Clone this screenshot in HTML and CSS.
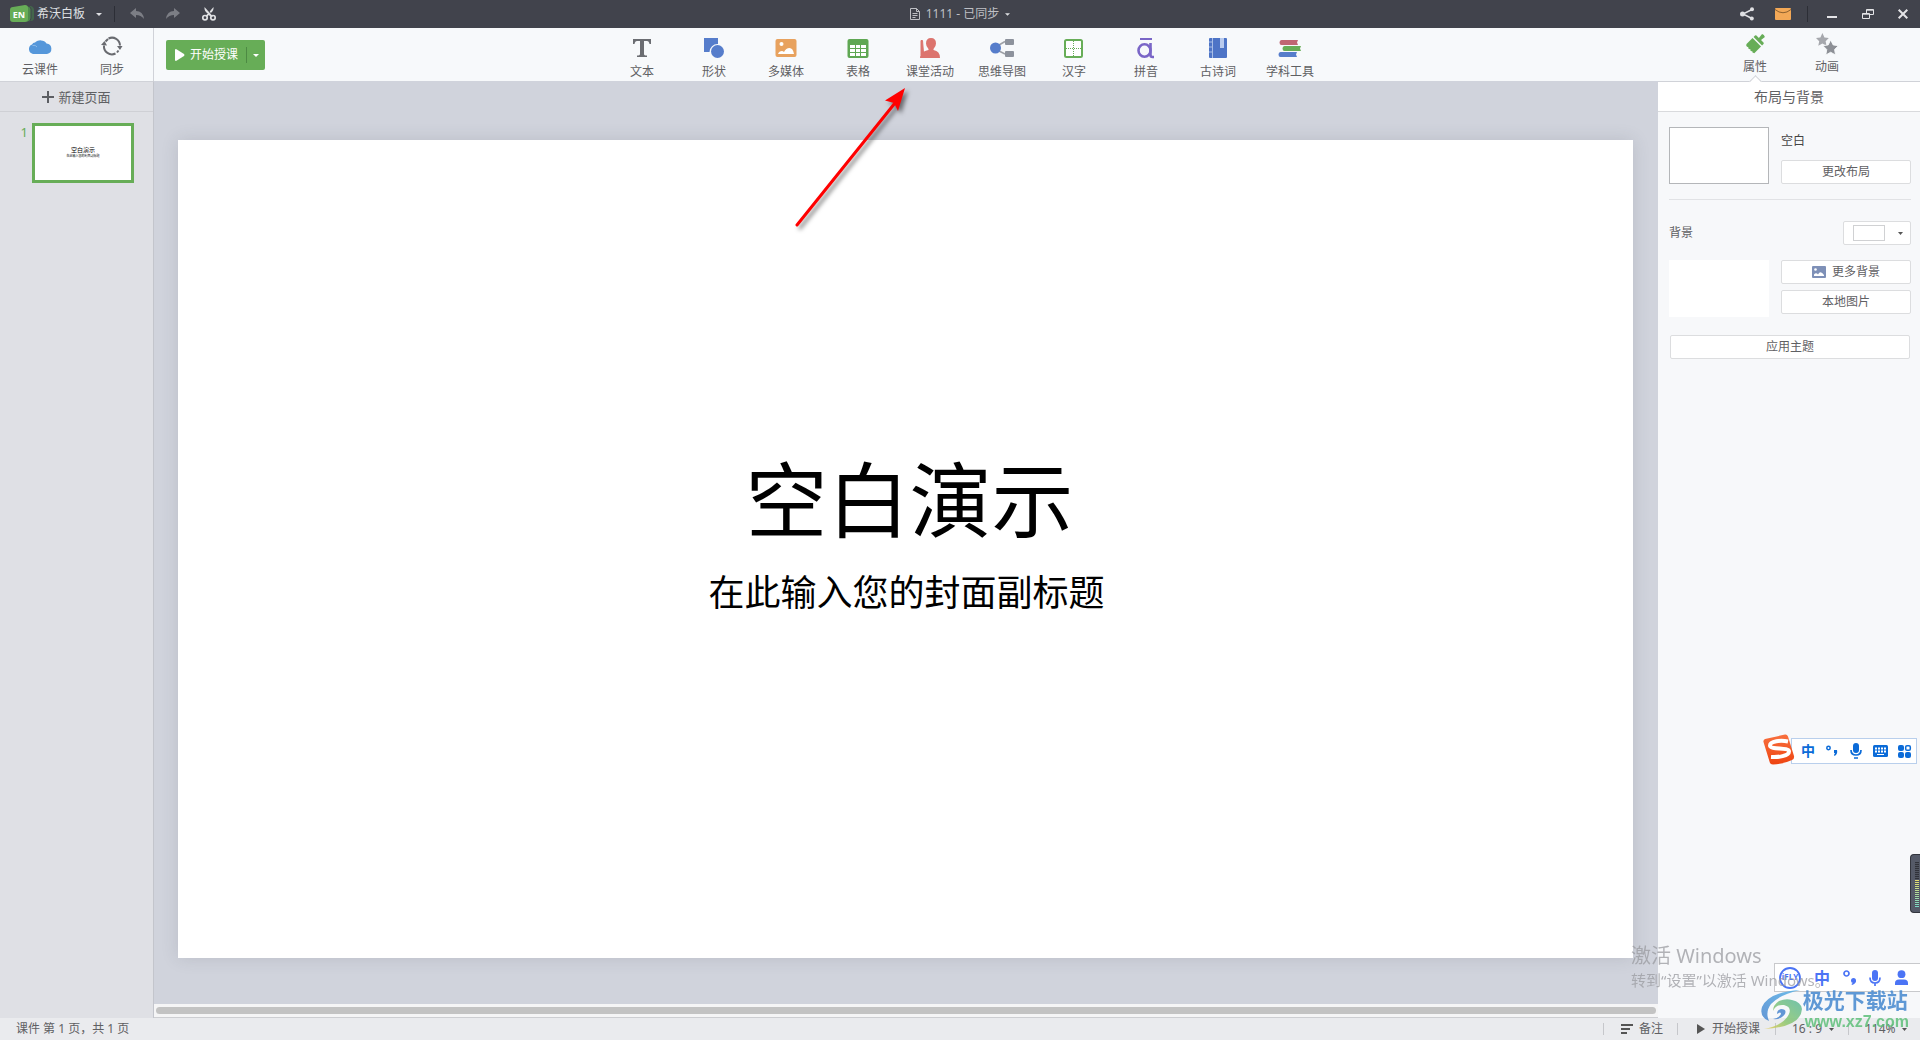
FILE: index.html
```html
<!DOCTYPE html>
<html lang="zh-CN">
<head>
<meta charset="utf-8">
<meta name="viewport" content="width=device-width, initial-scale=1">
<title>希沃白板</title>
<link rel="stylesheet" href="styles.css">
</head>
<body>
<header class="titlebar">
  <div class="titlebar-left">
    <svg class="logo" width="25" height="18" viewBox="0 0 25 18" aria-hidden="true">
      <path d="M18 1h3q3 1 3 4v8q0 3-3 3h-3z" fill="#43664b"/>
      <path d="M16 1h2q3 1 3 3v9q0 3-3 4h-2z" fill="#4e8a4d" stroke="#41434c" stroke-width="1"/>
      <path d="M3 2 15 0q3 0 3 3v11q0 3-3 3H3q-3 0-3-3V5q0-3 3-3z" fill="#67ad57"/>
      <text x="9" y="13" text-anchor="middle" class="logo-text">EN</text>
    </svg>
    <button class="app-menu" type="button">希沃白板<svg class="caret" width="6" height="3" viewBox="0 0 6 3"><path d="M0 0h6L3 3z"/></svg></button>
    <span class="bar-sep"></span>
    <button class="tool-btn dim" type="button" aria-label="撤销"><svg width="14" height="12" viewBox="0 0 14 12"><path d="M6 0v3q7 0 8 8-3-4-8-4v3L0 5z"/></svg></button>
    <button class="tool-btn dim" type="button" aria-label="重做"><svg width="14" height="12" viewBox="0 0 14 12"><path d="M8 0v3Q1 3 0 11q3-4 8-4v3l6-5z"/></svg></button>
    <button class="tool-btn" type="button" aria-label="剪切"><svg width="14" height="14" viewBox="0 0 14 14"><g fill="none" stroke="#dfe0e3" stroke-width="1.700"><circle cx="3" cy="10.700" r="2.200"/><circle cx="11" cy="10.700" r="2.200"/></g><path d="M2.500 0 11 9.500 9 10 6.800 8 5 10 3.400 9 5.800 6.500Q2 4 2.500 0zM11.500 0 7.700 4.600 8.800 5.900Q12 3.500 11.500 0z" fill="#dfe0e3"/></svg></button>
  </div>
  <button class="doc-title" type="button">
    <svg width="10" height="12" viewBox="0 0 10 12" fill="none" stroke="#bfc0c5"><path d="M.5.500h6l3 3v8h-9zM6.500.500v3h3M2.500 5.500h5M2.500 7.500h5M2.500 9.500h3"/></svg>
    <span>1111 - 已同步</span>
    <svg class="caret" width="5" height="3" viewBox="0 0 6 3"><path d="M0 0h6L3 3z"/></svg>
  </button>
  <div class="titlebar-right">
    <button class="tool-btn" type="button" aria-label="分享"><svg width="14" height="14" viewBox="0 0 14 14"><path d="M12 2.500 3 7l9 4.500" fill="none" stroke="#dfe0e3" stroke-width="1.500"/><g fill="#dfe0e3"><circle cx="2.500" cy="7" r="2.500"/><circle cx="12" cy="2.300" r="2"/><circle cx="11.800" cy="11.500" r="2"/></g></svg></button>
    <button class="tool-btn" type="button" aria-label="消息"><svg width="16" height="12" viewBox="0 0 16 12"><rect width="16" height="12" rx="1" fill="#f3a856"/><path d="M0 1.500Q8 8 16 1.500" fill="none" stroke="#8d612f"/></svg></button>
    <span class="bar-sep"></span>
    <button class="tool-btn" type="button" aria-label="最小化"><svg width="10" height="12" viewBox="0 0 10 12"><path d="M0 8h10v2H0z" fill="#e4e4e7"/></svg></button>
    <button class="tool-btn" type="button" aria-label="还原"><svg width="12" height="10" viewBox="0 0 12 10" fill="none" stroke="#e4e4e7"><path d="M.5 4.500h7v5h-7zM.5 5.200h7M4.500 4V.500h7v5H8M4.500 1.200h7"/></svg></button>
    <button class="tool-btn close" type="button" aria-label="关闭"><svg width="10" height="10" viewBox="0 0 10 10"><path d="M.7.700l8.600 8.600M9.300.700.700 9.300" stroke="#e4e4e7" stroke-width="2"/></svg></button>
  </div>
</header>

<nav class="toolbar">
  <div class="tools-left">
    <button class="tool" type="button"><svg width="24" height="20" viewBox="0 0 24 20"><path d="M5 18a5 5 0 0 1-1-9.500 4 4 0 0 1 3-2A7 6 0 0 1 18.500 7.500 5.300 5.300 0 0 1 19 18z" fill="#5597da"/><path d="M4.500 9.500Q7.500 8.500 9 11" fill="none" stroke="#8dbbe9"/></svg>云课件</button>
    <button class="tool" type="button"><svg width="24" height="20" viewBox="0 0 24 20"><path d="M8.500 2.500A8 8 0 0 1 20 9.500M15.500 17.500A8 8 0 0 1 4 9.500M5.500 5.500 8 3M18.500 14.500 17 16.500" fill="none" stroke="#696b70" stroke-width="2"/><path d="M1 9 4.500 5 7 9.500zM17 10h5.500L20 14z" fill="#696b70"/></svg>同步</button>
  </div>
  <div class="start">
    <button class="start-main" type="button"><svg width="10" height="12" viewBox="0 0 10 12"><path d="M0 1q0-1 1-1l8 5q1 1 0 2l-8 5q-1 0-1-1z" fill="#fff"/></svg>开始授课</button>
    <button class="start-more" type="button" aria-label="更多授课方式"><svg width="6" height="3" viewBox="0 0 6 3"><path d="M0 0h6L3 3z" fill="#fff"/></svg></button>
  </div>
  <div class="tools-main">
    <button class="tool" type="button"><svg width="24" height="20" viewBox="0 0 24 20"><path d="M3 1h18v5h-1.500Q19 3 17 3h-3v13q0 1.500 3 1.500V19H7v-1.500q3 0 3-1.500V3H7Q5 3 4.500 6H3z" fill="#6b6d72"/></svg>文本</button>
    <button class="tool" type="button"><svg width="24" height="20" viewBox="0 0 24 20"><path d="M2 0h14v6a8 8 0 0 0-8.500 8H2z" fill="#567dcb"/><circle cx="15.500" cy="13.500" r="6.500" fill="#567dcb"/></svg>形状</button>
    <button class="tool" type="button"><svg width="24" height="20" viewBox="0 0 24 20"><rect x="1.500" y="1" width="21" height="18" rx="2" fill="#e8a25e"/><circle cx="7.500" cy="6" r="2" fill="#fff"/><path d="M4 16q1-3 4-3 1 0 2 1 2-4 5.500-4Q19 10 20 16z" fill="#fff"/></svg>多媒体</button>
    <button class="tool" type="button"><svg width="24" height="20" viewBox="0 0 24 20"><rect x="1.500" y="1" width="21" height="19" rx="2" fill="#5fa753"/><path d="M4 7h5v3H4zM10 7h4v3h-4zM15 7h5v3h-5zM4 11h5v3H4zM10 11h4v3h-4zM15 11h5v3h-5zM4 15h5v3H4zM10 15h4v3h-4zM15 15h5v3h-5z" fill="#fff"/></svg>表格</button>
    <button class="tool" type="button"><svg width="24" height="20" viewBox="0 0 24 20"><path d="M3 2.500h1.500L5.500 15 3 17z" fill="#dc746e" stroke="#dc746e"/><path d="M13 0q5 0 5 5.500 0 3-2.500 5.500v1q6.500 1 6.500 8H2q0-4 4-6.500 3-1.500 4.500-1.500v-1Q8 8.500 8 5.500 8 0 13 0z" fill="#dc746e"/></svg>课堂活动</button>
    <button class="tool" type="button"><svg width="24" height="20" viewBox="0 0 24 20"><path d="M9 7 15 3.500M9 13l6 3" stroke="#9da0a6" stroke-width="1.500"/><circle cx="5.500" cy="10" r="5.500" fill="#567dcb"/><rect x="15" y="1" width="9" height="6" rx="1" fill="#8d929c"/><rect x="15" y="13" width="9" height="6" rx="1" fill="#8d929c"/></svg>思维导图</button>
    <button class="tool" type="button"><svg width="24" height="20" viewBox="0 0 24 20"><rect x="3" y="2" width="17" height="17" rx="1.500" fill="#fff" stroke="#67ad57" stroke-width="2"/><path d="M11.500 3v15M4 10.500h15" stroke="#67ad57" stroke-dasharray="1 1"/></svg>汉字</button>
    <button class="tool" type="button"><svg width="24" height="20" viewBox="0 0 24 20"><g fill="none" stroke="#7a66c7"><path d="M6 1h12" stroke-width="2"/><ellipse cx="10.500" cy="12.500" rx="6" ry="6.300" stroke-width="2.600"/><path d="M16.500 5v12q0 2 2 2H20" stroke-width="2.600"/></g></svg>拼音</button>
    <button class="tool" type="button"><svg width="24" height="20" viewBox="0 0 24 20"><rect x="3" width="18" height="20" rx="1" fill="#4d74c6"/><path d="M3 4h3M3 9h3M3 14h3M6.500 0v20" stroke="#a9bee6"/><path d="M14 0h4v10h-4z" fill="#b9cbee"/></svg>古诗词</button>
    <button class="tool" type="button"><svg width="24" height="20" viewBox="0 0 24 20"><path d="M3.500 2H20l-1 2.500 1 2.500H3.500q-2 0-2-2.500t2-2.500z" fill="#c06673"/><path d="M6.500 8H23l-1 2.500 1 2.500H6.500q-2 0-2-2.500t2-2.500z" fill="#67ad57"/><path d="M2.500 14H19l-1 2.500 1 2.500H2.500q-2 0-2-2.500t2-2.500z" fill="#567dcb"/></svg>学科工具</button>
  </div>
  <div class="tools-right">
    <button class="tool active" type="button"><svg width="24" height="20" viewBox="0 0 24 20"><g transform="rotate(45 12 10)" fill="#67ad57"><path d="M10-2q2-1 4 0l-.5 5H17q1 0 1 1v2H6V4q0-1 1-1h3.500zM6 7.500h12V17q-2 1.500-3 0-1 2-2.500 0-1.500 2-3 0Q7 18.500 6 16z"/></g></svg>属性</button>
    <button class="tool" type="button"><svg width="24" height="24" viewBox="0 0 24 24"><path d="M7 0l2.200 4.800 4.800.7-3.500 3.500 1 5L7 11.500 2.500 14l1-5L0 5.500l4.800-.7z" fill="#a6a8ad"/><path d="M16 7.500l2.700 5.500 5.800.800-4.200 4.200 1 6L16 21l-5.300 3 1-6-4.200-4.200 5.800-.800z" fill="#8d9096" stroke="#f7f9fb"/></svg>动画</button>
  </div>
</nav>

<div class="workspace">
  <aside class="pages">
    <button class="new-page" type="button"><svg width="12" height="12" viewBox="0 0 12 12"><path d="M6 0v12M0 6h12" stroke="#5c5e63" stroke-width="2"/></svg>新建页面</button>
    <ol class="page-list">
      <li class="page-item"><span class="page-no">1</span>
        <a class="thumb" href="#slide"><span class="thumb-title">空白演示</span><span class="thumb-sub">在此输入您的封面副标题</span></a></li>
    </ol>
  </aside>

  <main class="stage">
    <div class="canvas">
      <section class="slide" id="slide">
        <h1>空白演示</h1>
        <p>在此输入您的封面副标题</p>
      </section>
    </div>
    <div class="hscroll"><div class="hscroll-thumb"></div></div>
  </main>

  <aside class="panel">
    <h2>布局与背景</h2>
    <div class="panel-body">
      <div class="pair">
        <div class="preview framed"></div>
        <div class="pair-side"><span class="layout-name">空白</span><button class="btn" type="button">更改布局</button></div>
      </div>
      <hr>
      <div class="bg-row"><span id="bg-label">背景</span>
        <button class="color-btn" type="button" aria-labelledby="bg-label" aria-haspopup="listbox"><span class="swatch"></span><svg width="5" height="3" viewBox="0 0 5 3"><path d="M0 0h5L2.500 3z" fill="#555"/></svg></button>
      </div>
      <div class="pair">
        <div class="preview"></div>
        <div class="pair-side stacked">
          <button class="btn" type="button"><svg width="14" height="12" viewBox="0 0 14 12"><rect width="14" height="12" rx="1" fill="#7e90b7"/><circle cx="3.500" cy="3.500" r="1.300" fill="#fff"/><path d="M2 10V8.500Q4 6 6 8.500 8.500 4 12 9v1z" fill="#fff"/></svg>更多背景</button>
          <button class="btn" type="button">本地图片</button>
        </div>
      </div>
      <button class="btn apply" type="button">应用主题</button>
    </div>
  </aside>
</div>

<footer class="status">
  <span>课件 第 1 页，共 1 页</span>
  <div class="status-right">
    <button class="cell notes" type="button"><svg width="12" height="10" viewBox="0 0 12 10"><path d="M0 1h12M0 5h9M0 9h6" stroke="#555" stroke-width="2"/></svg>备注</button>
    <button class="cell play" type="button"><svg width="8" height="10" viewBox="0 0 8 10"><path d="M0 0l8 5-8 5z" fill="#555"/></svg>开始授课</button>
    <label class="cell ratio"><select aria-label="页面比例"><option>16 : 9</option></select><svg width="5" height="3" viewBox="0 0 5 3"><path d="M0 0h5L2.500 3z" fill="#555"/></svg></label>
    <label class="cell zoom"><select aria-label="缩放"><option>114%</option></select><svg width="5" height="3" viewBox="0 0 5 3"><path d="M0 0h5L2.500 3z" fill="#555"/></svg></label>
  </div>
</footer>

<svg class="arrow" width="130" height="160" viewBox="0 0 130 160" aria-hidden="true">
  <path d="M7 147 105 25" stroke="#f00" stroke-width="3" stroke-linecap="round"/>
  <path d="M115 10 95 22.500 104 25l4 8z" fill="#f00"/>
</svg>

<div class="ime sogou">
  <svg class="sogou-logo" width="32" height="31" viewBox="0 0 32 31" aria-hidden="true"><defs><linearGradient id="so" x2="0" y2="1"><stop stop-color="#f8703f"/><stop offset="1" stop-color="#ee4410"/></linearGradient></defs><path d="M2 5 22 .500q2-.500 3 2L31 22q.500 3-2 4-8 4-19 4.500-3 0-3.500-3L.500 8q-.500-2 1.500-3z" fill="url(#so)"/><path d="M25 7.500C18 6 7 7 7 11.500 7 16 26 13 26 17.500 26 22 15 23.500 8 23" fill="none" stroke="#fff" stroke-width="4"/></svg>
  <button type="button">中</button>
  <button type="button" aria-label="标点"><svg width="12" height="12" viewBox="0 0 12 12"><circle cx="2.500" cy="3" r="1.700" fill="none" stroke="currentColor" stroke-width="1.500"/><path d="M8 5h3q1 4-2.500 6l-.5-1 1-2H8z" fill="currentColor"/></svg></button>
  <button type="button" aria-label="语音"><svg width="12" height="16" viewBox="0 0 12 16"><rect x="3" width="6" height="10" rx="3" fill="currentColor"/><path d="M1 7q0 5 5 5t5-5M4 15h4" fill="none" stroke="currentColor" stroke-width="1.700"/></svg></button>
  <button type="button" aria-label="键盘"><svg width="15" height="12" viewBox="0 0 15 12"><rect width="15" height="12" rx="1.500" fill="currentColor"/><path d="M2 3.500h11M2 6.500h11" stroke="#fff" stroke-width="2" stroke-dasharray="2 1"/><path d="M4 9.500h7" stroke="#fff"/></svg></button>
  <button type="button" aria-label="工具箱"><svg width="13" height="13" viewBox="0 0 13 13" fill="currentColor"><rect width="6" height="6" rx="2"/><rect y="7" width="6" height="6" rx="2"/><rect x="7" y="7" width="6" height="6" rx="2"/><rect x="7.700" y=".7" width="4.600" height="4.600" rx="1.300" fill="none" stroke="currentColor" stroke-width="1.500"/></svg></button>
</div>

<div class="meter" aria-hidden="true"><span></span></div>

<div class="ime ifly">
  <button type="button" aria-label="iFLY"><svg width="22" height="22" viewBox="0 0 22 22"><circle cx="11" cy="11" r="10" fill="none" stroke="currentColor" stroke-width="1.800"/><text x="11" y="13" text-anchor="middle" class="ifly-text">iFLY</text></svg></button>
  <button type="button">中</button>
  <button type="button" aria-label="标点"><svg width="14" height="16" viewBox="0 0 14 16"><circle cx="3.500" cy="3.500" r="2.500" fill="none" stroke="currentColor" stroke-width="1.700"/><circle cx="10.500" cy="10.500" r="2.500" fill="currentColor"/><path d="M13 10q0 4-4 5l-.5-1q2-1 2-3z" fill="currentColor"/></svg></button>
  <button type="button" aria-label="语音"><svg width="12" height="16" viewBox="0 0 12 16"><rect x="3" width="6" height="11" rx="3" fill="currentColor"/><path d="M1 7.500q0 5.500 5 5.500t5-5.500M6 13v3" fill="none" stroke="currentColor" stroke-width="1.700"/></svg></button>
  <button type="button" aria-label="用户"><svg width="13" height="16" viewBox="0 0 13 16" fill="currentColor"><circle cx="6.500" cy="4.200" r="3.900"/><path d="M0 15v-2q0-3.500 4-3.500h5q4 0 4 3.500v2z"/></svg></button>
</div>

<div class="activate"><p class="activate-title">激活 Windows</p><p class="activate-sub">转到“设置”以激活 Windows。</p></div>

<div class="brand">
  <svg width="42" height="40" viewBox="0 0 42 40" aria-hidden="true"><defs><linearGradient id="br" x1="1" y1="0" x2="0" y2="1"><stop stop-color="#57b3e8"/><stop offset="1" stop-color="#4a86cf"/></linearGradient><linearGradient id="bg" x1="1" y1="0" x2="0" y2="1"><stop stop-color="#58b99e"/><stop offset=".6" stop-color="#8cc66e"/><stop offset="1" stop-color="#f0ce55"/></linearGradient></defs><path d="M39 0Q8 2 1 17q-3 10 7 14-4-9 2-17Q18 5 39 0z" fill="url(#br)"/><path d="M31 10q9 2 10 9-1 18-38 20 20-4 25-15 3-7-5-9-8-1-11 6 0-6 6-10 7-3 13-1z" fill="url(#bg)"/><path d="M12 29q8 1 12-5 2-5-4-5-4 1-4 5 4-3 4 0-2 4-8 5z" fill="#4a86cf"/></svg>
  <div><p class="brand-name">极光下载站</p><p class="brand-url">www.xz7.com</p></div>
</div>
</body>
</html>
```
FILE: styles.css
```css
* { box-sizing: border-box; }
body {
  margin: 0;
  min-height: 100vh;
  display: flex;
  flex-direction: column;
  position: relative;
  background: #eaebee;
  color: #5f6063;
  font: 12px/16px "Noto Sans", "Noto Sans CJK SC", sans-serif;
}
h1, h2, p, ol { margin: 0; padding: 0; font-weight: 400; }
ol { list-style: none; }
button, select {
  margin: 0; padding: 0; border: 0;
  background: none; color: inherit; font: inherit;
}
svg { display: block; flex: none; overflow: visible; }

/* title bar */
.titlebar {
  height: 28px;
  display: grid;
  grid-template-columns: 1fr auto 1fr;
  background: #41434c;
  color: #dfe0e3;
}
.titlebar-left, .titlebar-right, .doc-title, .app-menu { display: flex; align-items: center; }
.titlebar-left { padding-left: 10px; }
.titlebar-right { justify-content: flex-end; }
.logo-text { font: 700 9px "Open Sans", sans-serif; fill: #fff; }
.caret { fill: #dfe0e3; }
.app-menu { gap: 11px; margin-left: 2px; }
.bar-sep { width: 1px; height: 16px; margin: 0 6px; background: #2c2e36; }
.titlebar-left .bar-sep { margin: 0 4px 0 12px; }
.doc-title { gap: 6px; color: #bfc0c5; }
.tool-btn { width: 36px; height: 28px; display: flex; align-items: center; justify-content: center; }
.tool-btn.close { width: 34px; }
.dim { fill: #7c7e85; }

/* toolbar */
.toolbar { height: 53px; display: flex; background: #f7f9fb; }
.tools-left { width: 154px; display: flex; padding-left: 4px; border-right: 1px solid #d0d2d8; }
.tool {
  width: 72px;
  display: flex; flex-direction: column; align-items: center;
  gap: 6px; padding-top: 10px;
  white-space: nowrap;
}
.tools-left .tool { padding-top: 8px; }
.start { display: flex; align-self: flex-start; margin: 12px 0 0 12px; height: 30px; width: 99px; border-radius: 2px; background: #67ad57; color: #fff; }
.start-main { flex: 1; display: flex; align-items: center; gap: 5px; padding-left: 9px; }
.start-more { width: 19px; height: 16px; margin-top: 7px; display: flex; align-items: center; justify-content: center; border-left: 1px solid #4d8a43; }
.tools-main { display: flex; margin: 0 auto; padding-left: 2px; }
.tools-right { display: flex; width: 255px; padding-left: 54px; }
.tools-right .tool { gap: 4px; padding-top: 5px; }
.tools-right .tool svg { height: 22px; }
.active { position: relative; }
.active::after {
  content: ""; position: absolute; left: 32px; bottom: -5px;
  width: 8px; height: 8px; transform: rotate(45deg);
  background: #fff; border: 1px solid #d0d2d8; border-right: 0; border-bottom: 0;
}

/* workspace */
.workspace { flex: 1; display: flex; }
.pages { width: 154px; background: #dfe0e5; border-right: 1px solid #c3c5cc; border-top: 1px solid #d0d2d8; }
.new-page {
  width: 100%; height: 30px;
  display: flex; align-items: center; justify-content: center; gap: 4px;
  border-bottom: 1px solid #cfd0d5; font-size: 13px;
}
.page-list { padding: 11px 19px 0 0; }
.page-item { display: flex; justify-content: flex-end; gap: 4px; }
.page-no { color: #67ad57; font-size: 13px; line-height: 18px; }
.thumb {
  width: 102px; height: 60px;
  display: flex; flex-direction: column; align-items: center; justify-content: center;
  border: 3px solid #67ad57; background: #fff; color: #000; text-decoration: none; white-space: nowrap;
}
.thumb-title { font-size: 6px; line-height: 8px; }
.thumb-sub { font-size: 3px; line-height: 4px; padding-bottom: 2px; }

.stage { flex: 1; min-width: 0; display: flex; flex-direction: column; background: #d0d3dc; }
.canvas { flex: 1; padding: 59px 25px 44px 24px; }
.slide {
  aspect-ratio: 16 / 9;
  display: flex; flex-direction: column; align-items: center; justify-content: center;
  padding-bottom: 28px;
  background: #fff; color: #000;
  box-shadow: 0 0 16px rgba(60, 70, 80, .15);
}
.slide h1 { font-size: 82px; line-height: 98px; padding-left: 8px; }
.slide p { font-size: 36px; line-height: 54px; padding: 18px 0 0 2px; }
.hscroll { height: 14px; padding: 3px 2px; background: #f5f5f6; border-bottom: 1px solid #cdced2; }
.hscroll-thumb { height: 7px; border-radius: 4px; background: #c3c3c3; }

/* property panel */
.panel { width: 262px; background: #f7f8fa; border-top: 1px solid #d0d2d8; }
.panel h2 { height: 30px; line-height: 29px; font-size: 14px; text-align: center; background: #fff; border-bottom: 1px solid #d9dadd; }
.panel-body { padding: 15px 9px 0 11px; }
.pair { display: flex; gap: 12px; }
.preview { width: 100px; height: 57px; background: #fff; }
.framed { border: 1px solid #b4b6b9; }
.pair-side { flex: 1; display: flex; flex-direction: column; justify-content: space-between; gap: 6px; }
.stacked { justify-content: flex-start; }
.layout-name { padding-top: 6px; color: #444; }
.btn {
  height: 24px;
  display: flex; align-items: center; justify-content: center; gap: 6px;
  background: #fff; border: 1px solid #dcdddf; border-radius: 2px;
}
.panel hr { height: 1px; margin: 15px 0 21px; border: 0; background: #e1e2e5; }
.bg-row { display: flex; align-items: center; justify-content: space-between; margin-bottom: 15px; }
.color-btn {
  width: 68px; height: 24px; padding: 0 7px 0 9px;
  display: flex; align-items: center; justify-content: space-between;
  background: #fff; border: 1px solid #dcdddf; border-radius: 2px;
}
.swatch { width: 32px; height: 16px; border: 1px solid #d0d1d3; }
.apply { width: calc(100% - 2px); margin: 18px 1px 0; }

/* status bar */
.status { height: 22px; display: flex; align-items: center; justify-content: space-between; padding-left: 16px; line-height: 22px; }
.status-right { display: flex; }
.cell { position: relative; display: flex; align-items: center; }
.cell::before { content: ""; width: 1px; height: 12px; background: #c6c7cb; }
.cell select { appearance: none; }
.notes { width: 74px; gap: 6px; }
.notes svg { margin-left: 11px; }
.play { width: 98px; gap: 7px; }
.play svg { margin-left: 12px; }
.ratio { width: 73px; }
.zoom { width: 72px; }
.ratio select, .zoom select { width: 37px; margin: 0 0 0 16px; }

/* overlays */
.arrow { position: absolute; left: calc(50% - 170px); top: 78px; fill: none; filter: drop-shadow(3px 3px 2px rgba(0, 0, 0, .5)); }
.ime { position: absolute; display: flex; align-items: center; background: #fff; border: 1px solid #b9cfec; }
.ime button { display: flex; align-items: center; justify-content: center; font-weight: 700; }
.sogou { right: 3px; bottom: 276px; width: 126px; height: 26px; padding-left: 4px; color: #0b6bd8; }
.sogou button { width: 24px; font-size: 14px; }
.sogou-logo { position: absolute; left: -29px; top: -5px; }
.ifly { right: 0; bottom: 48px; width: 146px; height: 29px; padding-left: 0; border-color: #c8c9cc; border-right: 0; color: #4b74f5; }
.ifly button { width: 27px; font-size: 16px; }
.ifly button:nth-child(2) { width: 34px; }
.ifly button:nth-child(3) { width: 22px; }
.ifly button:first-child { width: 30px; }
.ifly-text { font: 700 8px "Open Sans", sans-serif; fill: currentColor; }
.meter { position: absolute; right: 0; bottom: 127px; width: 10px; height: 59px; padding: 7px 2px 6px 4px; background: #555a68; border: 1px solid #33353d; border-right: 0; border-radius: 4px 0 0 4px; }
.meter span {
  display: block; height: 45px; width: 4px;
  background: repeating-linear-gradient(#0000 0 1px, #50545f 1px 2px), linear-gradient(#30323a 0 18px, #e8e070 18px, #78d8c8);
}
.activate { position: absolute; right: 96px; bottom: 50px; width: 193px; color: #9a9ba0; opacity: .75; white-space: nowrap; }
.activate-title { font-size: 20px; line-height: 28px; }
.activate-sub { font-size: 15px; line-height: 20px; }
.brand { position: absolute; right: 11px; bottom: 9px; display: flex; align-items: center; opacity: .85; white-space: nowrap; }
.brand p { font-weight: 700; }
.brand-name { font-size: 21px; line-height: 23px; color: #4588cf; }
.brand-url { font: 700 16px/19px "Liberation Sans", sans-serif; color: #5fc07a; padding-left: 2px; }
```
